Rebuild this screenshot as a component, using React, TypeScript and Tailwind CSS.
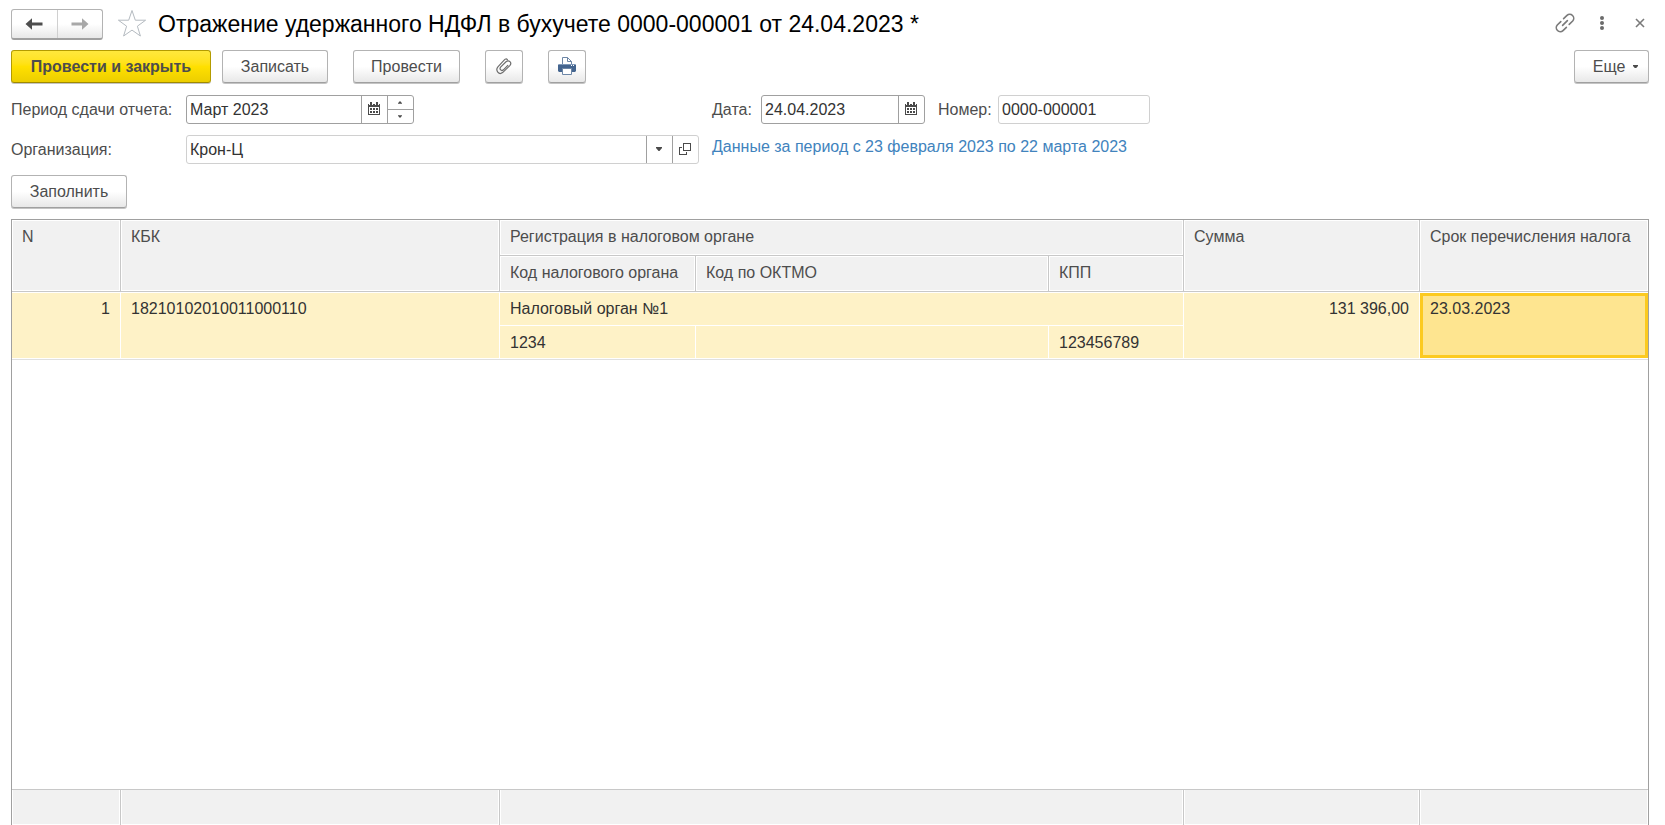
import { useState } from "react";
import type { ReactNode } from "react";

const row = {
  n: 1,
  kbk: "18210102010011000110",
  office: "Налоговый орган №1",
  officeCode: "1234",
  oktmo: "",
  kpp: "123456789",
  sum: "131 396,00",
  due: "23.03.2023",
};

const buttonBase =
  "flex h-[33px] items-center justify-center rounded-[3px] border shadow-[0_1px_0_#c4c4c4]";
const greyButton =
  "border-[#b3b3b3] border-b-[#a0a0a0] bg-linear-to-b from-white from-50% to-[#e8e8e8] text-[#4d4d4d]";
const fieldButton =
  "flex w-[26px] items-center justify-center border-l border-[#a0a0a0] pr-px pb-0.5";

function Button({ children, label, className = "px-4" }: {
  children: ReactNode;
  label?: string;
  className?: string;
}) {
  return (
    <button type="button" aria-label={label} className={`${buttonBase} ${greyButton} ${className}`}>
      {children}
    </button>
  );
}

function ArrowIcon({ flip = false }: { flip?: boolean }) {
  return (
    <svg width="18" height="12" viewBox="0 0 18 12" className={flip ? "rotate-180" : ""} fill="currentColor">
      <path d="M0.5 6 7 0.3 V4.5 H17.5 V7.5 H7 V11.7 Z" />
    </svg>
  );
}

function StarIcon() {
  return (
    <svg width="30" height="29" viewBox="0 0 30 29" fill="none" stroke="#b4bac0" strokeWidth="1">
      <path d="M15 1.5 18.3 11.2 H28.6 L20.4 17.2 23.4 27 15 21.1 6.6 27 9.6 17.2 1.4 11.2 H11.7 Z" />
    </svg>
  );
}

function LinkIcon() {
  return (
    <svg width="20" height="20" viewBox="0 0 20 20" fill="none" stroke="#7a7a7a" strokeWidth="1.6" strokeLinecap="round">
      <path d="M8.6 5.6 12 2.4 A4 4 0 0 1 17.7 8 L14.2 11.4" />
      <path d="M11.4 14.4 8 17.6 A4 4 0 0 1 2.3 12 L5.8 8.6" />
      <path d="M7.6 12.4 12.4 7.6" />
    </svg>
  );
}

function DotsIcon() {
  return (
    <svg width="6" height="16" viewBox="0 0 6 16" fill="#6b6b6b">
      <circle cx="3" cy="3" r="2" />
      <circle cx="3" cy="8" r="2" />
      <circle cx="3" cy="13" r="2" />
    </svg>
  );
}

function CloseIcon() {
  return (
    <svg width="10" height="10" viewBox="0 0 10 10" stroke="#7a7a7a" strokeWidth="1.6">
      <path d="M1 1 9 9 M9 1 1 9" />
    </svg>
  );
}

function ClipIcon() {
  return (
    <svg width="16" height="17" viewBox="0 0 16 17" fill="none" stroke="#6e6e6e" strokeWidth="1.2" strokeLinecap="round">
      <path d="M11.4 1.6 C10.4 0.5 9.2 1 8.4 1.8 L1.9 8.8 C-0.9 12.4 2.8 17.4 6.6 14.6 L13.8 7.6 C16.4 4.6 12.8 1.2 10 3.8 L4.6 9.2 C3 11.2 5.4 13.6 7.4 11.8 L11.8 7.4" />
    </svg>
  );
}

function PrinterIcon() {
  return (
    <svg width="18" height="19" viewBox="0 0 18 19">
      <path d="M4.5 8 V0.5 H9.5 L13.5 4.5 V8" fill="#fff" stroke="#6d86a6" />
      <path d="M9.5 0.5 V4.5 H13.5" fill="none" stroke="#6d86a6" />
      <path d="M1 7 H17 L18 8 V14 L17 15 H1 L0 14 V8 Z" fill="#44658f" />
      <path d="M1 7 H17 V8 H1 Z" fill="#7f99b9" />
      <path d="M13 8 H14 V9 H13 Z M15 8 H16 V9 H15 Z" fill="#fff" />
      <path d="M4.5 11.5 H13.5 V17.5 H4.5 Z" fill="#fff" stroke="#6d86a6" />
    </svg>
  );
}

function CalendarIcon() {
  return (
    <svg width="12" height="13" viewBox="0 0 12 13" shapeRendering="crispEdges">
      <path d="M0 2 H12 V13 H0 Z M2 0 H4 V2 H2 Z M8 0 H10 V2 H8 Z" fill="#4a4a4a" />
      <path d="M1 5 H11 V12 H1 Z M1 2 H2 V3 H1 Z M4 2 H5 V3 H4 Z M7 2 H8 V3 H7 Z M10 2 H11 V3 H10 Z" fill="#fff" />
      <path
        d="M2 6 H4 V8 H2 Z M5 6 H7 V8 H5 Z M8 6 H10 V8 H8 Z M2 9 H4 V11 H2 Z M5 9 H7 V11 H5 Z M8 9 H10 V11 H8 Z"
        fill="#4a4a4a"
      />
    </svg>
  );
}

function OpenIcon() {
  return (
    <svg width="12" height="12" viewBox="0 0 12 12" fill="#4a4a4a">
      <path d="M4 0 H12 V8 H4 Z M5 1 V7 H11 V1 Z" fillRule="evenodd" />
      <path d="M0 4 H3 V5 H1 V11 H7 V9 H8 V12 H0 Z" />
    </svg>
  );
}

function Triangle({ size, up = false }: { size: number; up?: boolean }) {
  return (
    <svg width={size} height={size / 2 + 1} viewBox="0 0 6 4" fill="#4a4a4a" className={up ? "rotate-180" : ""}>
      <path d="M0 0 H6 V1 L3.5 4 H2.5 L0 1 Z" />
    </svg>
  );
}

const headCell =
  "border-r border-b border-[#c8c8c8] bg-[#f1f1f1] px-2.5 pt-[5px] text-left align-top font-normal text-[#4d4d4d] shadow-[inset_0_0_0_1px_#fff]";
const bodyCell = "border-r border-b border-white bg-[#fef2c7] px-2.5 align-top";
const footCell =
  "h-9 border-t border-r border-[#c8c8c8] bg-[#f1f1f1] shadow-[inset_1px_0_#fff,inset_-1px_0_#fff,inset_0_-1px_#fff] last:border-r-0";

function TaxTable() {
  return (
    <table className="h-full w-full table-fixed border-separate border-spacing-0">
      <colgroup>
        <col className="w-[109px]" />
        <col className="w-[379px]" />
        <col className="w-[196px]" />
        <col />
        <col className="w-[135px]" />
        <col className="w-[236px]" />
        <col className="w-[228px]" />
      </colgroup>
      <thead>
        <tr className="h-9">
          <th rowSpan={2} className={headCell}>N</th>
          <th rowSpan={2} className={headCell}>КБК</th>
          <th colSpan={3} className={headCell}>Регистрация в налоговом органе</th>
          <th rowSpan={2} className={headCell}>Сумма</th>
          <th rowSpan={2} className={`${headCell} whitespace-nowrap last:border-r-0`}>Срок перечисления налога</th>
        </tr>
        <tr className="h-9">
          <th className={`${headCell} whitespace-nowrap`}>Код налогового органа</th>
          <th className={headCell}>Код по ОКТМО</th>
          <th className={headCell}>КПП</th>
        </tr>
      </thead>
      <tbody>
        <tr className="h-[34px]">
          <td rowSpan={2} className={`${bodyCell} border-t pt-1 text-right`}>{row.n}</td>
          <td rowSpan={2} className={`${bodyCell} border-t pt-1`}>{row.kbk}</td>
          <td colSpan={3} className={`${bodyCell} border-t pt-1`}>{row.office}</td>
          <td rowSpan={2} className={`${bodyCell} border-t pt-1 text-right`}>{row.sum}</td>
          <td
            rowSpan={2}
            className="border-y border-white bg-[#fee590] px-2.5 pt-1 align-top shadow-[inset_0_0_0_3px_#fcca20]"
          >
            {row.due}
          </td>
        </tr>
        <tr className="h-[33px]">
          <td className={`${bodyCell} pt-[5px]`}>{row.officeCode}</td>
          <td className={`${bodyCell} pt-[5px]`}>{row.oktmo}</td>
          <td className={`${bodyCell} pt-[5px]`}>{row.kpp}</td>
        </tr>
        <tr>
          <td colSpan={7} className="border-t border-[#e0e0e0]" />
        </tr>
      </tbody>
      <tfoot>
        <tr className="h-9">
          <td className={footCell} />
          <td className={footCell} />
          <td colSpan={3} className={footCell} />
          <td className={footCell} />
          <td className={footCell} />
        </tr>
      </tfoot>
    </table>
  );
}

export default function App() {
  const [period, setPeriod] = useState("Март 2023");
  const [date, setDate] = useState("24.04.2023");
  const [number, setNumber] = useState("0000-000001");
  const [org, setOrg] = useState("Крон-Ц");

  return (
    <main className="flex h-screen flex-col bg-white pr-4 pl-[11px] font-['Liberation_Sans',Arial,sans-serif] text-base text-[#333]">
      {/* Title bar */}
      <header className="flex items-center pt-[9px]">
        <div className="flex h-[31px] w-[92px] rounded-[3px] border border-b-2 border-[#b3b3b3] border-b-[#a0a0a0] bg-linear-to-b from-white from-50% to-[#e8e8e8]">
          <button type="button" aria-label="Назад" className="flex flex-1 items-center justify-center border-r border-[#d0d0d0] text-[#4d4d4d]">
            <ArrowIcon />
          </button>
          <button type="button" aria-label="Вперед" className="flex flex-1 items-center justify-center text-[#a8a8a8]">
            <ArrowIcon flip />
          </button>
        </div>
        <div className="flex flex-1 items-center pb-0.5">
          <button type="button" aria-label="В избранное" className="ml-3.5">
            <StarIcon />
          </button>
          <h1 className="ml-[11px] text-[23px] leading-7 whitespace-nowrap text-black">
            Отражение удержанного НДФЛ в бухучете 0000-000001 от 24.04.2023 *
          </h1>
          <div className="ml-auto flex items-center gap-6 pr-1 pb-0.5">
            <button type="button" aria-label="Получить ссылку"><LinkIcon /></button>
            <button type="button" aria-label="Действия"><DotsIcon /></button>
            <button type="button" aria-label="Закрыть" className="ml-1.5"><CloseIcon /></button>
          </div>
        </div>
      </header>

      {/* Command bar */}
      <div className="mt-2.5 flex items-center gap-[25px]">
        <div className="flex gap-[11px]">
          <button
            type="button"
            className={`${buttonBase} w-[200px] border-[#b39b00] border-b-[#a08a00] bg-linear-to-b from-[#ffe83c] via-[#ffe000] to-[#ecce00] font-bold text-[#4d4d4d]`}
          >
            Провести и закрыть
          </button>
          <Button className="w-[106px]">Записать</Button>
        </div>
        <Button className="w-[107px]">Провести</Button>
        <Button label="Присоединенные файлы" className="w-[38px]"><ClipIcon /></Button>
        <Button label="Печать" className="w-[38px]"><PrinterIcon /></Button>
        <Button className="ml-auto w-[75px] gap-2 pl-2">
          Еще <Triangle size={5} />
        </Button>
      </div>

      {/* Document fields */}
      <div className="mt-3 flex gap-[13px]">
        <div className="flex w-[688px] shrink-0 flex-col gap-[11px]">
          <div className="flex items-center">
            <label htmlFor="period" className="w-[175px] whitespace-nowrap text-[#4d4d4d]">Период сдачи отчета:</label>
            <div className="flex h-[29px] w-[228px] rounded-[3px] border border-[#a0a0a0]">
              <input id="period" value={period} onChange={(e) => setPeriod(e.target.value)} className="min-w-0 flex-1 px-[3px] outline-none" />
              <button type="button" aria-label="Выбрать период" className={fieldButton}>
                <CalendarIcon />
              </button>
              <div className="flex w-[26px] flex-col border-l border-[#a0a0a0]">
                <button type="button" aria-label="Следующий месяц" className="flex flex-1 items-center justify-center border-b border-[#a0a0a0] pr-px">
                  <Triangle size={4} up />
                </button>
                <button type="button" aria-label="Предыдущий месяц" className="flex flex-1 items-center justify-center pr-px">
                  <Triangle size={4} />
                </button>
              </div>
            </div>
          </div>
          <div className="flex items-center">
            <label htmlFor="org" className="w-[175px] text-[#4d4d4d]">Организация:</label>
            <div className="flex h-[29px] flex-1 rounded-[3px] border border-[#d0d0d0]">
              <input id="org" value={org} onChange={(e) => setOrg(e.target.value)} className="min-w-0 flex-1 px-[3px] outline-none" />
              <button type="button" aria-label="Выбрать из списка" className={fieldButton}>
                <Triangle size={6} />
              </button>
              <button type="button" aria-label="Открыть" className={fieldButton}>
                <OpenIcon />
              </button>
            </div>
          </div>
        </div>

        <div className="flex flex-col gap-[11px]">
          <div className="flex items-center">
            <label htmlFor="date" className="w-[49px] text-[#4d4d4d]">Дата:</label>
            <div className="flex h-[29px] w-[164px] rounded-[3px] border border-[#a0a0a0]">
              <input id="date" value={date} onChange={(e) => setDate(e.target.value)} className="min-w-0 flex-1 px-[3px] outline-none" />
              <button type="button" aria-label="Выбрать дату" className={fieldButton}>
                <CalendarIcon />
              </button>
            </div>
            <label htmlFor="number" className="ml-[13px] w-[60px] text-[#4d4d4d]">Номер:</label>
            <input
              id="number"
              value={number}
              onChange={(e) => setNumber(e.target.value)}
              className="h-[29px] w-[152px] rounded-[3px] border border-[#d0d0d0] px-[3px] outline-none"
            />
          </div>
          <a href="#" className="leading-6 whitespace-nowrap text-[#4183bd]">
            Данные за период с 23 февраля 2023 по 22 марта 2023
          </a>
        </div>
      </div>

      <div className="mt-[11px] flex">
        <Button className="w-[116px]">Заполнить</Button>
      </div>

      {/* Tabular section */}
      <section className="mt-[11px] min-h-0 flex-1 border border-b-0 border-[#a0a0a0]">
        <TaxTable />
      </section>
    </main>
  );
}
